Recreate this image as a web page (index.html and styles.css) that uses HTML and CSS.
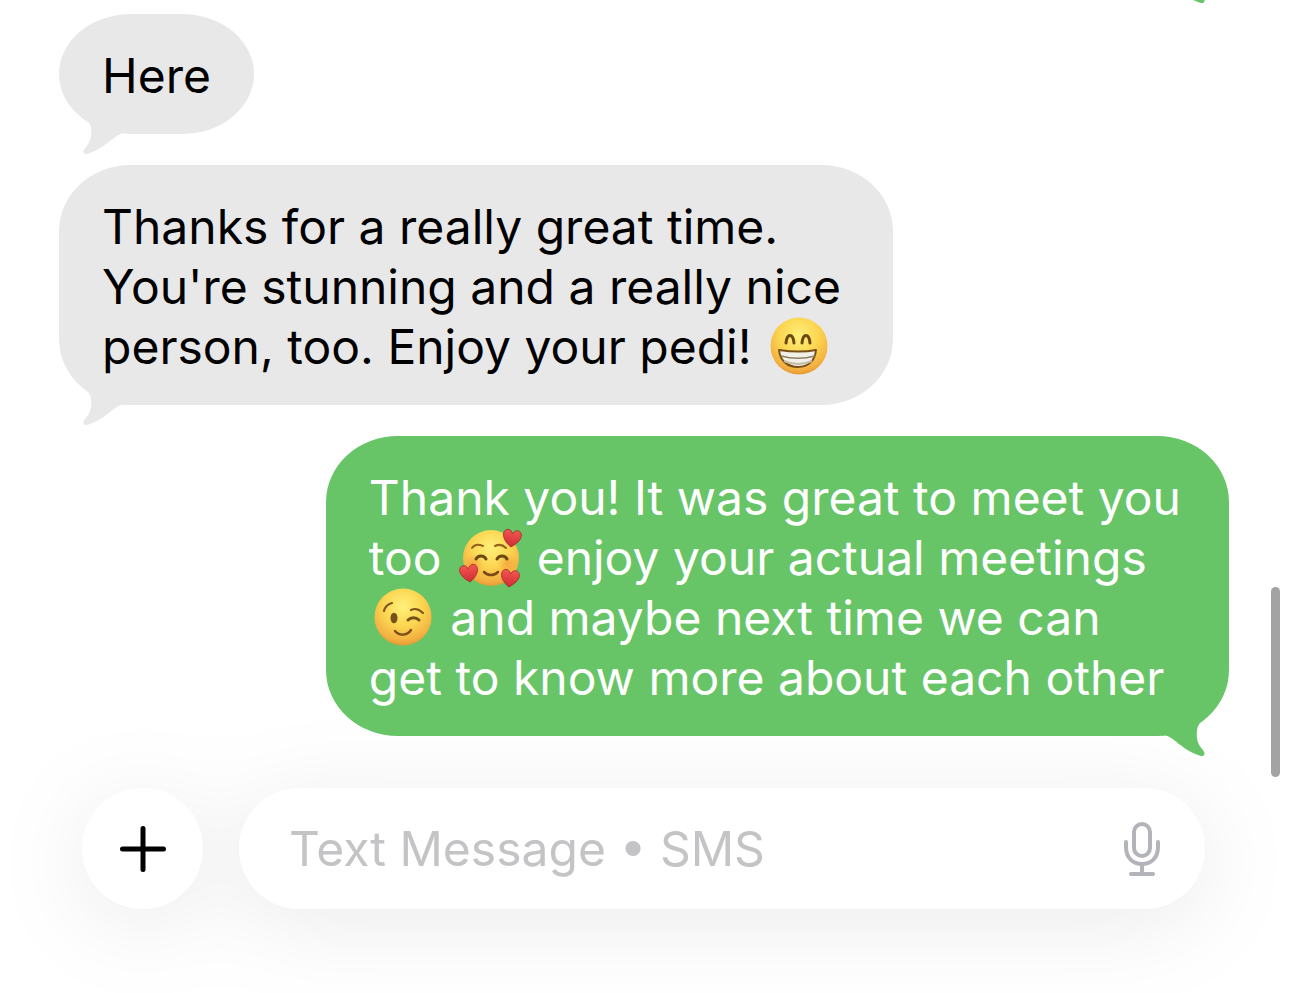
FILE: index.html
```html
<!DOCTYPE html>
<html lang="en">
<head>
    <meta charset="UTF-8">
    <meta name="viewport" content="width=device-width, initial-scale=1.0">
    <title>Messages</title>
    <link rel="stylesheet" href="styles.css">
</head>
<body>
    <!-- shared shapes -->
    <svg class="defs" width="0" height="0" aria-hidden="true">
        <defs>
            <radialGradient id="face" cx="50%" cy="32%" r="70%">
                <stop offset="0" stop-color="#fff07a"/>
                <stop offset="0.5" stop-color="#fbd550"/>
                <stop offset="0.85" stop-color="#f3b041"/>
                <stop offset="1" stop-color="#e39433"/>
            </radialGradient>
            <radialGradient id="blush">
                <stop offset="0" stop-color="#f0762e" stop-opacity="0.4"/>
                <stop offset="1" stop-color="#f0762e" stop-opacity="0"/>
            </radialGradient>
            <linearGradient id="heart-fill" x1="0" y1="0" x2="0" y2="1">
                <stop offset="0" stop-color="#f4574f"/>
                <stop offset="1" stop-color="#cf2b35"/>
            </linearGradient>
            <path id="heart" d="M0 9 C-5 6 -9 1 -9 -3 C-9 -9 -2 -10 0 -4 C2 -10 9 -9 9 -3 C9 1 5 6 0 9 Z" fill="url(#heart-fill)" stroke="#a3302c" stroke-width="0.8"/>
            <path id="tail" d="M0 0 C5 7 16 13 17 22 C18 31 16 36 12 41 C7 46 10 50 16 47 C33 41 41 28 50 27 L50 0 Z"/>
        </defs>
    </svg>

    <main class="thread">
        <div class="bubble sent previous">
            <svg class="tail" viewBox="0 0 50 50" aria-hidden="true"><use href="#tail"/></svg>
        </div>

        <div class="bubble received short">
            Here
            <svg class="tail" viewBox="0 0 50 50" aria-hidden="true"><use href="#tail"/></svg>
        </div>

        <div class="bubble received">
            Thanks for a really great time.<br>
            You're stunning and a really nice<br>
            person, too. Enjoy your pedi!
            <svg class="emoji" viewBox="0 0 60 60" role="img" aria-label="beaming face">
                <circle cx="30" cy="30" r="28.5" fill="url(#face)"/>
                <path d="M17 27 C18 17 24 17 25 27 M33 27 C34 17 40 17 41 27" fill="none" stroke="#6b4712" stroke-width="3" stroke-linecap="round"/>
                <path d="M10 34 C23 36 37 36 47 34 C46 45 39 51 29 51 C19 51 11 45 10 34 Z" fill="#f3f0e8" stroke="#775018" stroke-width="2" stroke-linejoin="round"/>
                <path d="M12 40 C23 43 35 43 46 40" fill="none" stroke="#8d8069" stroke-width="1.5"/>
                <path d="M15 45 C24 49 34 49 43 45" fill="none" stroke="#c6bba5" stroke-width="2"/>
            </svg>
            <svg class="tail" viewBox="0 0 50 50" aria-hidden="true"><use href="#tail"/></svg>
        </div>

        <div class="bubble sent">
            Thank you! It was great to meet you<br>
            too
            <svg class="emoji" viewBox="0 0 60 60" role="img" aria-label="smiling face with hearts">
                <circle cx="32" cy="31" r="28" fill="url(#face)"/>
                <circle cx="15" cy="37" r="10" fill="url(#blush)"/>
                <circle cx="48" cy="36" r="10" fill="url(#blush)"/>
                <path d="M13 21 C15 18 19 17 24 19 M36 19 C40 17 44 18 47 21" fill="none" stroke="#94631b" stroke-width="2" stroke-linecap="round"/>
                <path d="M17 32 C19 28 25 28 27 32 M38 32 C40 28 46 28 48 32" fill="none" stroke="#6b4712" stroke-width="3" stroke-linecap="round"/>
                <path d="M25 45 C29 49 35 49 39 45" fill="none" stroke="#7d4a17" stroke-width="2.5" stroke-linecap="round"/>
                <use href="#heart" transform="translate(53 11) rotate(8)"/>
                <use href="#heart" transform="translate(10 46) rotate(-8)"/>
                <use href="#heart" transform="translate(51 51) rotate(8)"/>
            </svg>
            enjoy your actual meetings<br>
            <svg class="emoji" viewBox="0 0 60 60" role="img" aria-label="winking face">
                <circle cx="30" cy="30" r="28.5" fill="url(#face)"/>
                <path d="M11 24 C12 20 15 17 19 16 M38 23 C42 21 46 22 50 26" fill="none" stroke="#80561a" stroke-width="2.2" stroke-linecap="round"/>
                <ellipse cx="21" cy="31" rx="3.5" ry="5.2" fill="#75501a"/>
                <path d="M35 33 C38 30 43 30 46 33" fill="none" stroke="#75501a" stroke-width="3" stroke-linecap="round"/>
                <path d="M22 44 C26 49 34 49 38 43" fill="none" stroke="#80501a" stroke-width="2.5" stroke-linecap="round"/>
            </svg>
            and maybe next time we can<br>
            get to know more about each other
            <svg class="tail" viewBox="0 0 50 50" aria-hidden="true"><use href="#tail"/></svg>
        </div>
        <div class="scrollbar"></div>
    </main>

    <form class="composer">
        <button class="add" type="button" aria-label="Add attachment">
            <svg width="48" height="48" viewBox="0 0 48 48">
                <path d="M24 3.5 V44.5 M3.5 24 H44.5" stroke="#000" stroke-width="5" stroke-linecap="round"/>
            </svg>
        </button>
        <div class="field">
            <input type="text" aria-label="Message" placeholder="Text Message • SMS">
            <button class="mic" type="button" aria-label="Dictate">
                <svg width="36" height="56" viewBox="0 0 36 56" fill="none" stroke="#b3b4b9" stroke-width="4" stroke-linecap="round">
                    <rect x="10" y="3" width="16" height="32" rx="8"/>
                    <path d="M2 21 V26 C2 37 9 43 18 43 C27 43 34 37 34 26 V21 M18 43 V52 M7 53 H29"/>
                </svg>
            </button>
        </div>
    </form>
</body>
</html>
```
FILE: styles.css
```css
* {
    box-sizing: border-box;
}
body {
    margin: 0;
    min-height: 100vh;
    overflow: hidden;
    background: #fff;
    font-family: Inter, "Liberation Sans", sans-serif;
    font-size: 48px;
    line-height: 60px;
    color: #000;
}
.defs {
    position: absolute;
}
.thread {
    position: relative;
    z-index: 1;
    display: flex;
    flex-direction: column;
    gap: 31px;
    padding: 0 60px 0 59px;
}
.bubble {
    position: relative;
    padding: 32px 44px 28px 43px;
    border-radius: 72px / 66px;
    white-space: nowrap;
}
.received {
    align-self: flex-start;
    background: #e8e8e8;
    fill: #e8e8e8;
    padding-right: 52px;
}
.sent {
    align-self: flex-end;
    background: #67c568;
    fill: #67c568;
    color: #fff;
    padding-right: 48px;
}
.short {
    padding-right: 43px;
    border-radius: 72px / 60px;
}
/* the message above, scrolled out of view */
.previous {
    width: 300px;
    height: 120px;
    margin-top: -137px;
}
.tail {
    position: absolute;
    left: 15px;
    bottom: -22px;
    width: 50px;
    height: 50px;
}
.sent .tail {
    left: auto;
    right: 15px;
    transform: scaleX(-1);
}
.emoji {
    width: 60px;
    height: 60px;
    margin: -6px 4px;
    vertical-align: -6px;
    overflow: visible;
}
.scrollbar {
    position: absolute;
    right: 9px;
    bottom: -41px;
    width: 9px;
    height: 190px;
    border-radius: 5px;
    background: #a3a3a3;
}
.composer {
    display: flex;
    gap: 36px;
    padding: 52px 84px 84px 82px;
    filter: drop-shadow(0 14px 45px rgba(0, 0, 0, 0.08));
}
.add,
.field {
    height: 121px;
    border-radius: 61px;
    background: #fff;
}
.add {
    display: flex;
    align-items: center;
    justify-content: center;
    flex: none;
    width: 121px;
    padding: 0;
    border: 0;
}
.field {
    display: flex;
    align-items: center;
    flex: 1;
    padding: 0 45px 0 50px;
}
.field input {
    flex: 1;
    min-width: 0;
    height: 60px;
    padding: 0;
    border: 0;
    outline: 0;
    background: none;
    font: inherit;
}
.field input::placeholder {
    color: #c4c4c6;
    opacity: 1;
}
.mic {
    display: flex;
    padding: 0;
    border: 0;
    background: none;
}
```
